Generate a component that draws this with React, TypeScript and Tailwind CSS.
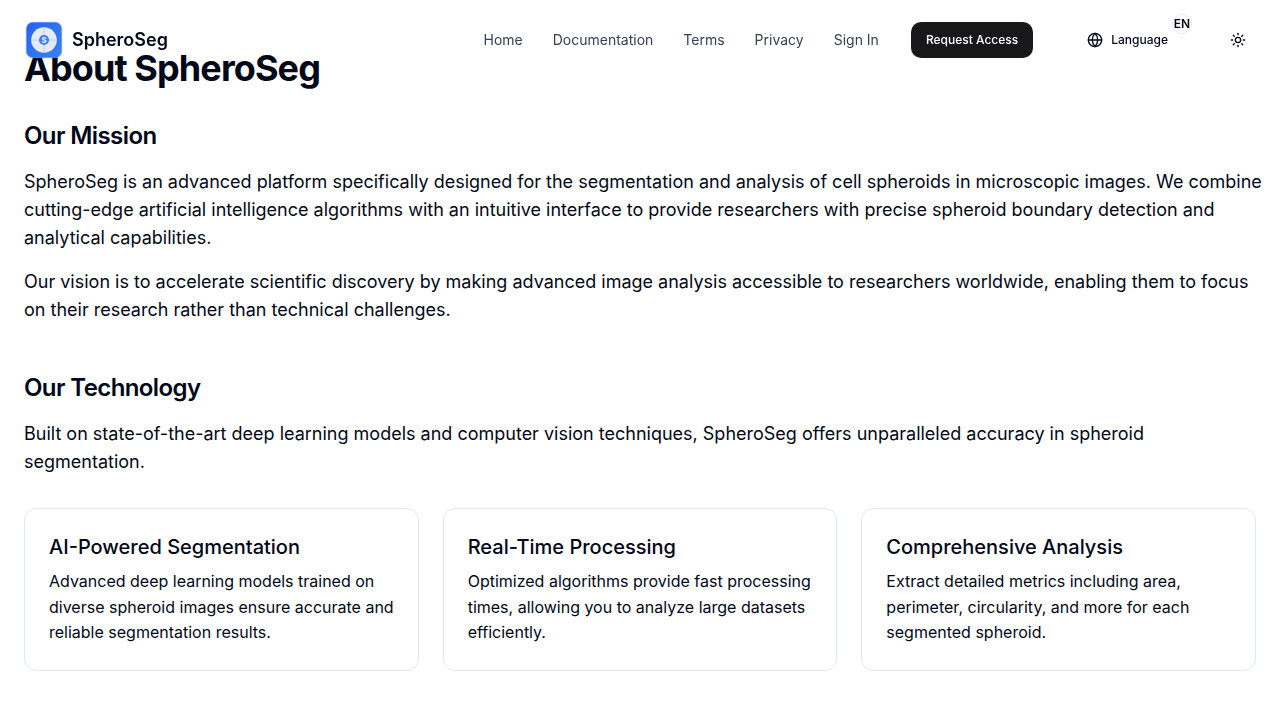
import { Globe, Sun } from "lucide-react";

const links = ["Home", "Documentation", "Terms", "Privacy", "Sign In"];

const features = [
  {
    title: "AI-Powered Segmentation",
    text: "Advanced deep learning models trained on diverse spheroid images ensure accurate and reliable segmentation results.",
  },
  {
    title: "Real-Time Processing",
    text: "Optimized algorithms provide fast processing times, allowing you to analyze large datasets efficiently.",
  },
  {
    title: "Comprehensive Analysis",
    text: "Extract detailed metrics including area, perimeter, circularity, and more for each segmented spheroid.",
  },
];

function Logo() {
  return (
    <svg viewBox="0 0 40 40" className="size-10" aria-hidden="true">
      <defs>
        <linearGradient id="logo-fill" x1="0" y1="0" x2="1" y2="1">
          <stop offset="0" stopColor="#2563eb" />
          <stop offset="1" stopColor="#3b82f6" />
        </linearGradient>
      </defs>
      <rect x="2.3" y="2.3" width="35.4" height="35.4" rx="6.5" fill="url(#logo-fill)" stroke="#6b9bf8" strokeWidth="0.6" />
      <circle cx="20" cy="20" r="12.8" fill="#e3eafa" />
      <path d="M20 7.2v25.6M7.2 20h25.6" stroke="#c3cee0" strokeWidth="1" />
      <circle cx="20" cy="20" r="5" fill="#3b7df3" />
      <text x="20" y="22.9" textAnchor="middle" fontSize="8" fontWeight="700" fill="#fff">
        S
      </text>
    </svg>
  );
}

function Header() {
  return (
    <header className="fixed inset-x-0 top-0 z-10 flex items-center justify-between px-6 py-5">
      <a href="#home" className="flex items-center gap-2">
        <Logo />
        <span className="text-lg font-semibold">SpheroSeg</span>
      </a>
      <nav className="flex items-center gap-8">
        <div className="flex items-center gap-[30px] text-sm text-gray-700">
          {links.map((l) => (
            <a key={l} href="#top">
              {l}
            </a>
          ))}
        </div>
        <a
          href="#access"
          className="flex h-9 items-center rounded-[10px] bg-[#18181b] px-[15px] text-xs font-medium text-[#fafafa]"
        >
          Request Access
        </a>
        <div className="flex items-center gap-9 pl-1.5">
          <button type="button" className="relative flex h-9 items-center gap-2 px-4 text-xs font-medium">
            <Globe size={16} />
            Language
            <span className="absolute -right-2 -top-2 flex size-5 items-center justify-center rounded-full border border-[#e2e8f0] font-semibold">
              EN
            </span>
          </button>
          <button type="button" aria-label="Toggle theme" className="flex size-9 items-center justify-center">
            <Sun size={16} />
          </button>
        </div>
      </nav>
    </header>
  );
}

export default function App() {
  return (
    <div className="min-h-screen bg-white font-['Inter',sans-serif] text-[#020817]">
      <Header />
      <main className="px-6 pt-12">
        <h1 className="mb-8 text-4xl font-bold tracking-tight">About SpheroSeg</h1>
        <section className="mb-12">
          <h2 className="mb-4 text-2xl font-semibold tracking-tight">Our Mission</h2>
          <div className="-mr-4 flex flex-col gap-4 text-lg">
            <p>
              SpheroSeg is an advanced platform specifically designed for the segmentation and analysis of cell
              spheroids in microscopic images. We combine cutting-edge artificial intelligence algorithms with an
              intuitive interface to provide researchers with precise spheroid boundary detection and analytical
              capabilities.
            </p>
            <p>
              Our vision is to accelerate scientific discovery by making advanced image analysis accessible to
              researchers worldwide, enabling them to focus on their research rather than technical challenges.
            </p>
          </div>
        </section>
        <section>
          <h2 className="mb-4 text-2xl font-semibold tracking-tight">Our Technology</h2>
          <p className="mb-8 text-lg">
            Built on state-of-the-art deep learning models and computer vision techniques, SpheroSeg offers
            unparalleled accuracy in spheroid segmentation.
          </p>
          <div className="grid grid-cols-3 gap-6">
            {features.map((f) => (
              <article key={f.title} className="rounded-xl border border-[#e2e8f0] p-6">
                <h3 className="mb-2 text-xl font-medium">{f.title}</h3>
                <p className="leading-[1.6]">{f.text}</p>
              </article>
            ))}
          </div>
        </section>
      </main>
    </div>
  );
}
